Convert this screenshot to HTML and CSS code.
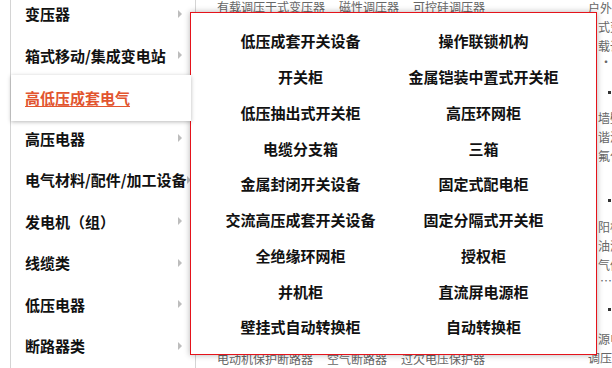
FILE: index.html
```html
<!DOCTYPE html>
<html lang="zh-CN">
<head>
<meta charset="utf-8">
<title>产品分类</title>
<link rel="stylesheet" href="styles.css">
</head>
<body>
<div class="page">
  <ul class="sidebar">
    <li class="cat"><span>变压器</span><i class="arrow"></i></li>
    <li class="cat"><span>箱式移动/集成变电站</span><i class="arrow"></i></li>
    <li class="cat active"><a href="#">高低压成套电气</a></li>
    <li class="cat"><span>高压电器</span><i class="arrow"></i></li>
    <li class="cat"><span>电气材料/配件/加工设备</span><i class="arrow"></i></li>
    <li class="cat"><span>发电机（组）</span><i class="arrow"></i></li>
    <li class="cat"><span>线缆类</span><i class="arrow"></i></li>
    <li class="cat"><span>低压电器</span><i class="arrow"></i></li>
    <li class="cat"><span>断路器类</span><i class="arrow"></i></li>
  </ul>

  <div class="main">
    <div class="links top">
      <span>有载调压干式变压器</span><span>磁性调压器</span><span>可控硅调压器</span>
    </div>
    <div class="bottom">
      <div class="links"><span>电动机保护断路器</span><span>空气断路器</span><span>过欠电压保护器</span></div>
      <div class="links"><span>剩余电流动作断路器</span><span>小型断路器</span><span>真空断路器</span></div>
    </div>
  </div>

  <div class="news">
    <div class="nl">户外箱式</div>
    <div class="nl in">式变压器</div>
    <div class="nl in">载调压器</div>
    <div class="ndot">·</div>
    <div class="bullet b1"></div>
    <div class="nl in g1">墙壁开关</div>
    <div class="nl in">谐波治理</div>
    <div class="nl in">氟化物</div>
    <div class="bullet b2"></div>
    <div class="nl in g2">阳极氧化</div>
    <div class="nl in">油浸式</div>
    <div class="nl in">气体绝缘</div>
    <div class="ndot">…</div>
    <div class="bullet b3"></div>
    <div class="nl in g3">源电流</div>
    <div class="nl">调压器</div>
  </div>

  <div class="panel">
    <div class="grid">
      <a href="#">低压成套开关设备</a><a href="#">操作联锁机构</a>
      <a href="#">开关柜</a><a href="#">金属铠装中置式开关柜</a>
      <a href="#">低压抽出式开关柜</a><a href="#">高压环网柜</a>
      <a href="#">电缆分支箱</a><a href="#">三箱</a>
      <a href="#">金属封闭开关设备</a><a href="#">固定式配电柜</a>
      <a href="#">交流高压成套开关设备</a><a href="#">固定分隔式开关柜</a>
      <a href="#">全绝缘环网柜</a><a href="#">授权柜</a>
      <a href="#">并机柜</a><a href="#">直流屏电源柜</a>
      <a href="#">壁挂式自动转换柜</a><a href="#">自动转换柜</a>
    </div>
  </div>
</div>
</body>
</html>
```

FILE: styles.css
```css
html, body {
  margin: 0;
  padding: 0;
  background: #fff;
  overflow: hidden;
}

body {
  font-family: "Noto Sans CJK SC", "Noto Sans", sans-serif;
}

.page {
  position: relative;
  display: flex;
  align-items: flex-start;
  width: 612px;
  height: 368px;
  padding-left: 10px;
  box-sizing: border-box;
  overflow: hidden;
}

.sidebar {
  flex: none;
  list-style: none;
  margin: -7px 0 0 0;
  padding: 0 0 20px 0;
  width: 184px;
  border-left: 1px solid #d4d4d4;
  border-right: 1px solid #d4d4d4;
}

.cat {
  display: flex;
  align-items: center;
  justify-content: space-between;
  height: 41.5px;
  padding: 0 13px 0 14px;
  font-size: 15px;
  font-weight: 700;
  color: #111;
  white-space: nowrap;
}

.arrow {
  flex: none;
  width: 0;
  height: 0;
  border-left: 4px solid #bdbdbd;
  border-top: 4px solid transparent;
  border-bottom: 4px solid transparent;
}

.cat.active {
  position: relative;
  z-index: 3;
  height: 46px;
  margin: -1.5px 4px -3px 0;
  background: #fff;
  box-shadow: 0 1px 4px rgba(0, 0, 0, 0.28);
}

.cat.active a {
  color: #e2552f;
  text-decoration: underline;
  text-underline-offset: 2px;
}

.main {
  flex: none;
  width: 392px;
  height: 390px;
  padding-left: 21px;
  box-sizing: border-box;
  display: flex;
  flex-direction: column;
  justify-content: space-between;
  font-size: 12px;
  color: #666;
}

.links {
  display: flex;
  gap: 14px;
  line-height: 16px;
  white-space: nowrap;
}

.links.top {
  margin-top: -1px;
}

.bottom {
  padding-bottom: 7px;
}

.news {
  flex: none;
  width: 60px;
  margin-top: -2.5px;
  font-size: 12px;
  color: #666;
  white-space: nowrap;
}

.nl {
  height: 19px;
  line-height: 19px;
}

.nl.in {
  padding-left: 10px;
}

.ndot {
  height: 14px;
  line-height: 14px;
  padding-left: 12px;
  overflow: hidden;
}

.bullet {
  width: 3px;
  height: 3px;
  margin-left: 20px;
  background: #333;
}

.b1 { margin-top: 22px; }
.b2 { margin-top: 34.5px; }
.b3 { margin-top: 20.5px; }
.g1 { margin-top: 14px; }
.g2 { margin-top: 14.5px; }
.g3 { margin-top: 17.5px; }

.panel {
  position: absolute;
  z-index: 2;
  left: 190px;
  top: 12px;
  width: 407px;
  height: 343px;
  box-sizing: border-box;
  border: 1px solid #e5131b;
  background: #fff;
  box-shadow: 0 0 6px rgba(0, 0, 0, 0.3);
}

.grid {
  display: grid;
  grid-template-columns: 183px 183px;
  grid-auto-rows: 35.75px;
  padding: 10px 0 0 18px;
}

.grid a {
  display: flex;
  align-items: center;
  justify-content: center;
  font-size: 15px;
  font-weight: 700;
  color: #111;
  text-decoration: none;
  white-space: nowrap;
}
```
